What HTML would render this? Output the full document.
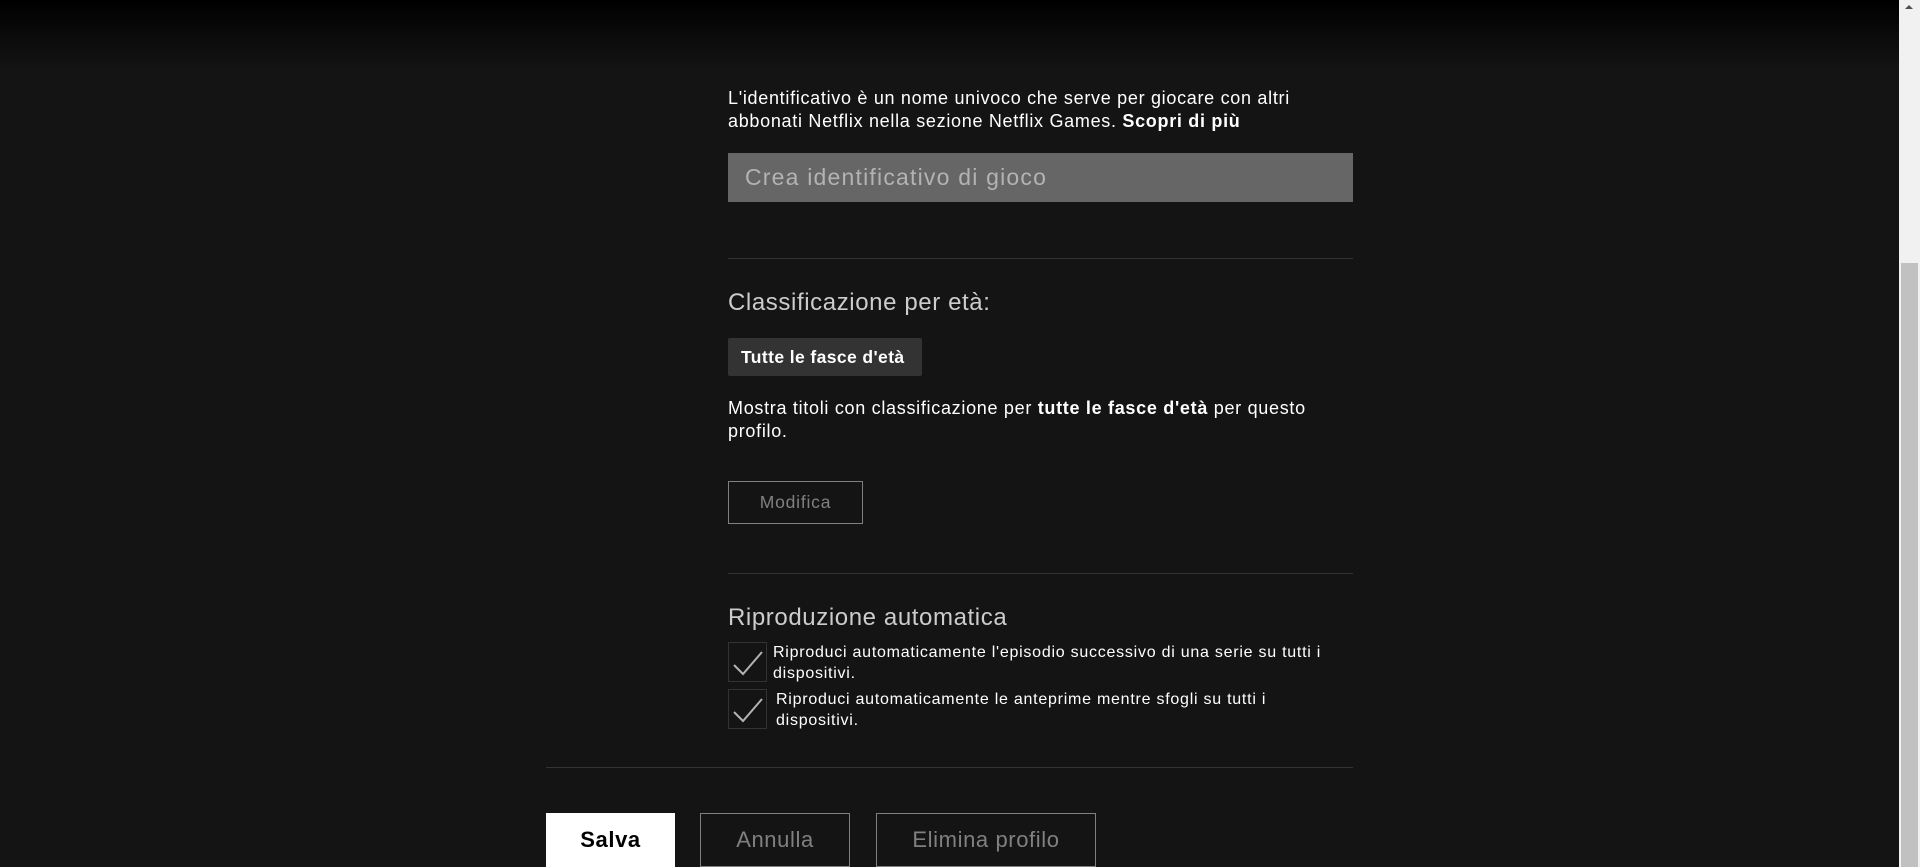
<!DOCTYPE html>
<html><head><meta charset="utf-8"><style>
*{margin:0;padding:0;box-sizing:border-box}
html,body{width:1920px;height:867px;overflow:hidden;background:#141414;font-family:"Liberation Sans",Arial,sans-serif;color:#fff}
.grad{position:absolute;left:0;top:0;width:1899px;height:70px;background:linear-gradient(#000,#141414)}
.sb{position:absolute;left:1899px;top:0;width:21px;height:867px;background:#f1f1f1}
.sb .th{position:absolute;left:2px;right:2px;top:263px;bottom:0;background:#c1c1c1}
.sb .ar{position:absolute;left:6px;top:5px;width:0;height:0;border-left:4px solid transparent;border-right:4px solid transparent;border-bottom:4px solid #505050}
.a{position:absolute}
.p{font-size:18px;line-height:23px;letter-spacing:0.7px}
.hr{position:absolute;height:1px;background:#333}
.btn{position:absolute;display:flex;align-items:center;justify-content:center;border:1px solid #808080;color:#808080;font-size:22px;letter-spacing:0.6px}
.cb{position:absolute;left:728px;width:39px;height:40px;border:1px solid #333}
.cb svg{position:absolute;left:3px;top:6px}
.ct{position:absolute;font-size:16px;line-height:21px;letter-spacing:0.75px}
.h{position:absolute;left:728px;font-size:24px;color:#ccc;letter-spacing:0.6px}
</style></head><body>
<div class="grad"></div>
<div class="a p" style="left:728px;top:87px;width:680px">L'identificativo è un nome univoco che serve per giocare con altri<br>abbonati Netflix nella sezione Netflix Games. <b>Scopri di più</b></div>
<div class="a" style="left:728px;top:153px;width:625px;height:49px;background:#666;color:#b3b3b3;font-size:23px;line-height:49px;padding-left:17px;letter-spacing:1.2px">Crea identificativo di gioco</div>
<div class="hr" style="left:728px;top:258px;width:625px"></div>
<div class="h" style="top:289px">Classificazione per età:</div>
<div class="a" style="left:728px;top:338px;width:194px;height:38px;background:#333;border-radius:2px;font-weight:bold;font-size:17.5px;line-height:38px;padding-left:13px;letter-spacing:0.4px">Tutte le fasce d'età</div>
<div class="a p" style="left:728px;top:397px;width:680px">Mostra titoli con classificazione per <b>tutte le fasce d'età</b> per questo<br>profilo.</div>
<div class="btn" style="left:728px;top:481px;width:135px;height:43px;font-size:17.5px;letter-spacing:0.8px">Modifica</div>
<div class="hr" style="left:728px;top:573px;width:625px"></div>
<div class="h" style="top:604px">Riproduzione automatica</div>
<div class="cb" style="top:642px"><svg width="32" height="28" viewBox="0 0 32 28"><path d="M2 16 L11 25 L30 3" fill="none" stroke="#b3b3b3" stroke-width="2"/></svg></div>
<div class="ct" style="left:773px;top:642px">Riproduci automaticamente l'episodio successivo di una serie su tutti i<br>dispositivi.</div>
<div class="cb" style="top:689px"><svg width="32" height="28" viewBox="0 0 32 28"><path d="M2 16 L11 25 L30 3" fill="none" stroke="#b3b3b3" stroke-width="2"/></svg></div>
<div class="ct" style="left:776px;top:689px">Riproduci automaticamente le anteprime mentre sfogli su tutti i<br>dispositivi.</div>
<div class="hr" style="left:546px;top:767px;width:807px"></div>
<div class="btn" style="left:546px;top:813px;width:129px;height:54px;background:#fff;border-color:#fff;color:#000;font-weight:bold">Salva</div>
<div class="btn" style="left:700px;top:813px;width:150px;height:54px">Annulla</div>
<div class="btn" style="left:876px;top:813px;width:220px;height:54px">Elimina profilo</div>
<div class="sb"><div class="ar"></div><div class="th"></div></div>
</body></html>
